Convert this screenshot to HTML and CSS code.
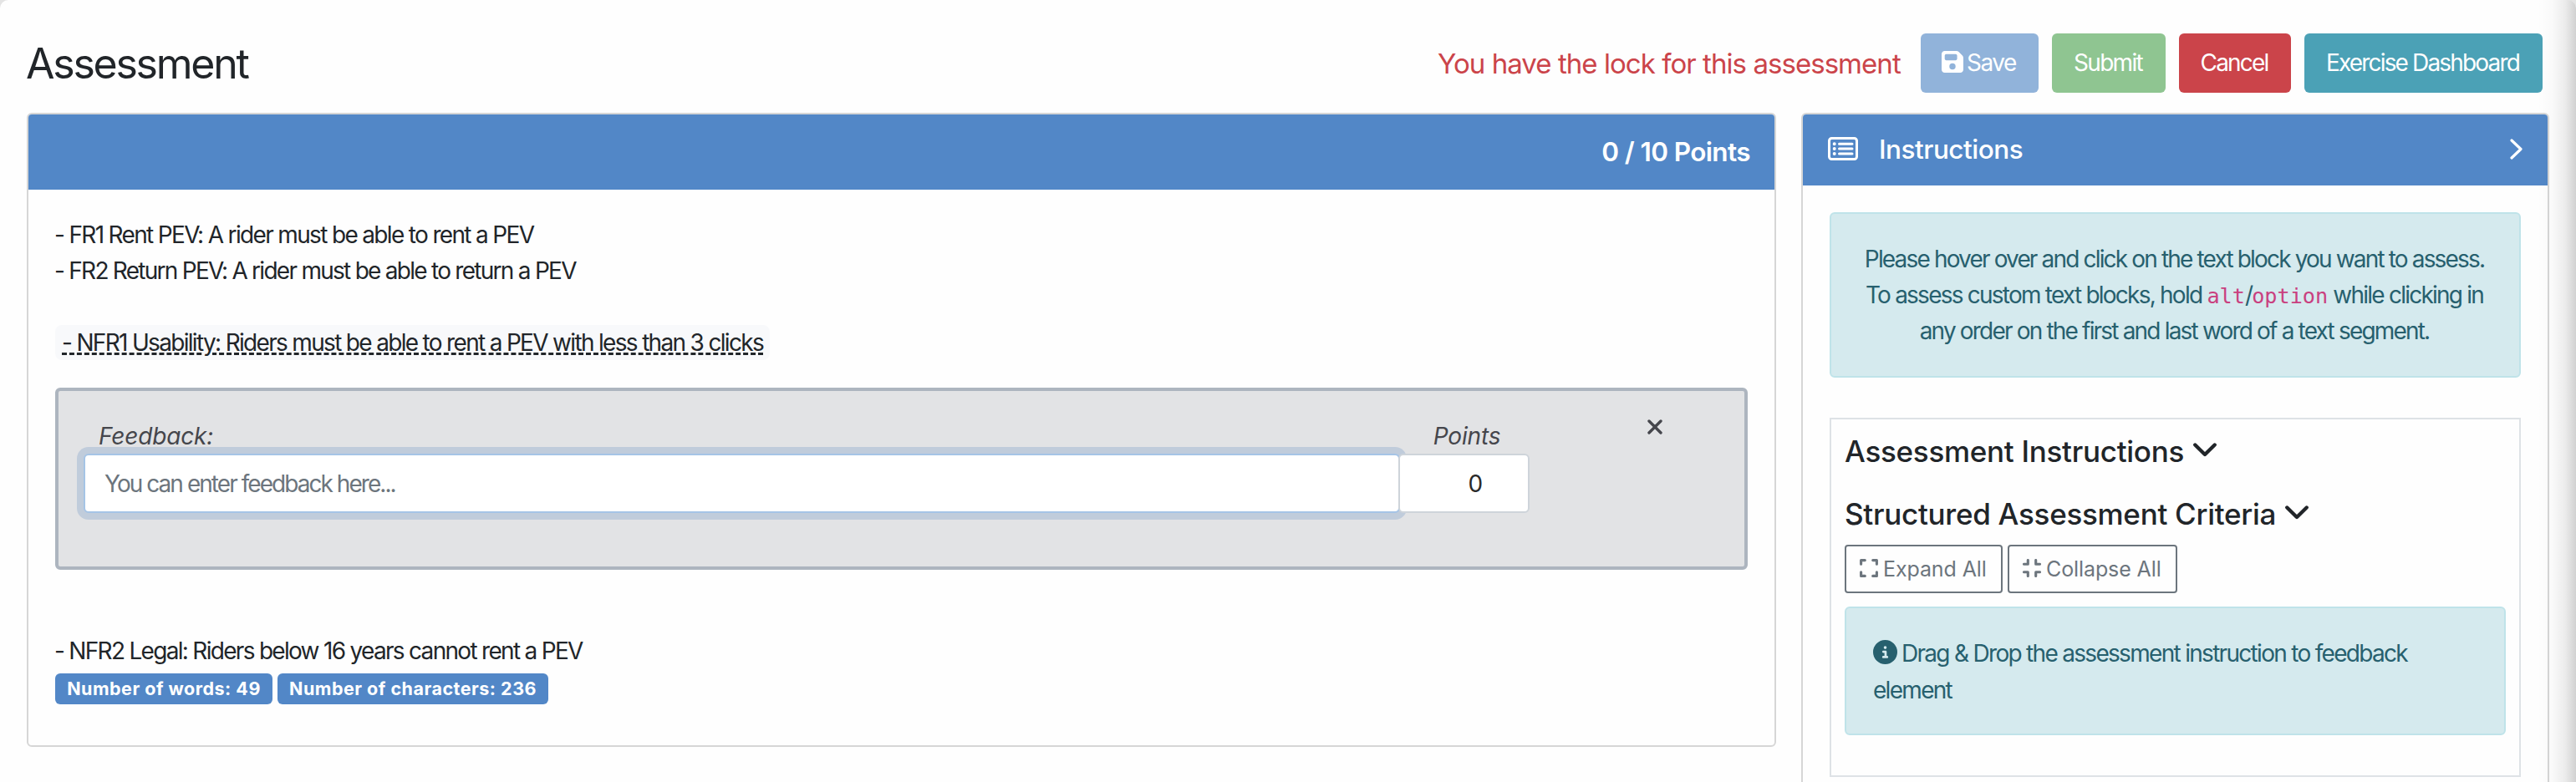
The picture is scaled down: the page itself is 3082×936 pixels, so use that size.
FILE: index.html
```html
<!DOCTYPE html>
<html lang="en">
<head>
<meta charset="utf-8">
<title>Assessment</title>
<link rel="stylesheet" href="styles.css">
</head>
<body>
<div class="page">
  <header class="topbar">
    <h1 class="title">Assessment</h1>
    <div class="actions">
      <span class="lock-note">You have the lock for this assessment</span>
      <button class="btn btn-save"><svg class="icon-save" viewBox="0 32 448 448"><path fill-rule="evenodd" d="M64 32C28.7 32 0 60.7 0 96V416c0 35.3 28.7 64 64 64H384c35.3 0 64-28.7 64-64V173.3c0-17-6.7-33.3-18.7-45.3L352 50.7C340 38.7 323.7 32 306.7 32H64zm0 96c0-17.700 14.300-32 32-32H288c17.700 0 32 14.300 32 32v64c0 17.700-14.300 32-32 32H96c-17.700 0-32-14.300-32-32V128zM224 288a64 64 0 1 1 0 128 64 64 0 1 1 0-128z"/></svg>Save</button>
      <button class="btn btn-submit">Submit</button>
      <button class="btn btn-cancel">Cancel</button>
      <button class="btn btn-dashboard">Exercise Dashboard</button>
    </div>
  </header>

  <main class="columns">
    <section class="card card-text">
      <div class="card-header points-header">0 / 10 Points</div>
      <div class="card-body">
        <p class="line">- FR1 Rent PEV: A rider must be able to rent a PEV</p>
        <p class="line line-fr2">- FR2 Return PEV: A rider must be able to return a PEV</p>
        <p class="line">&nbsp;</p>
        <p class="line"><span class="block-ref">- NFR1 Usability: Riders must be able to rent a PEV with less than 3 clicks</span></p>
        <div class="feedback">
          <div class="field field-text">
            <label class="label">Feedback:</label>
            <div class="input input-focus">You can enter feedback here...</div>
          </div>
          <div class="field field-points">
            <label class="label label-points">Points</label>
            <div class="input input-points">0</div>
          </div>
          <svg class="icon-close" viewBox="0 0 18 18"><path d="M2 2L16 16M16 2L2 16"/></svg>
        </div>
        <p class="line">&nbsp;</p>
        <p class="line line-nfr2">- NFR2 Legal: Riders below 16 years cannot rent a PEV</p>
        <div class="badges">
          <span class="badge badge-words">Number of words: 49</span>
          <span class="badge badge-chars">Number of characters: 236</span>
        </div>
      </div>
    </section>

    <aside class="card card-help">
      <div class="card-header help-header">
        <svg class="icon-list" viewBox="0 0 36 28"><rect x="1.500" y="1.500" width="33" height="25" rx="3"/><path d="M13.500 8.300H29M13.500 14H29M13.500 19.900H29"/><path class="dots" d="M7.700 8.300h.01M7.700 14h.01M7.700 19.900h.01"/></svg>
        <span class="help-title">Instructions</span>
        <svg class="icon-right" viewBox="0 0 15 25"><path d="M2 2L13 12.500L2 23"/></svg>
      </div>
      <div class="card-body">
        <div class="alert alert-hint"><span class="hint-click">Please hover over and click on the text block you want to assess.</span><br><span class="hint-custom">To assess custom text blocks, hold <code>alt</code>/<code>option</code> while clicking in</span><br><span class="hint-order">any order on the first and last word of a text segment.</span></div>
        <div class="criteria">
          <h2 class="section-title">Assessment Instructions <svg class="icon-down" viewBox="0 0 28 17"><path d="M2.300 2.500L14 14L25.700 2.500"/></svg></h2>
          <h2 class="section-title">Structured Assessment Criteria <svg class="icon-down" viewBox="0 0 28 17"><path d="M2.300 2.500L14 14L25.700 2.500"/></svg></h2>
          <div class="toggles">
            <button class="btn-sm btn-expand"><svg class="icon-sm" viewBox="0 0 22 22"><path d="M1.600 6.300V1.600H6.300M15.700 1.600H20.400V6.300M20.400 15.700V20.400H15.700M6.300 20.400H1.600V15.700"/></svg>Expand All</button>
            <button class="btn-sm btn-collapse"><svg class="icon-sm" viewBox="0 0 22 22"><path d="M1.500 6.200H6.300V1.500M15.700 1.500V6.200H20.500M1.500 15.800H6.300V20.500M20.500 15.800H15.700V20.500"/></svg>Collapse All</button>
          </div>
          <div class="alert alert-drag"><svg class="icon-info" viewBox="0 0 512 512"><path fill-rule="evenodd" d="M256 512A256 256 0 1 0 256 0a256 256 0 1 0 0 512zM216 336h24V272H216c-13.300 0-24-10.700-24-24s10.700-24 24-24h48c13.300 0 24 10.700 24 24v88h8c13.300 0 24 10.700 24 24s-10.700 24-24 24H216c-13.300 0-24-10.700-24-24s10.700-24 24-24zm40-208a32 32 0 1 1 0 64 32 32 0 1 1 0-64z"/></svg>Drag &amp; Drop the assessment instruction to feedback<br>element</div>
        </div>
      </div>
    </aside>
  </main>
  <div class="edge-shadow"></div>
</div>
</body>
</html>
```
FILE: styles.css
```css
* { box-sizing: border-box; }

body {
  margin: 0;
  background: #e4e4e4;
  font-family: Inter, "Open Sans", sans-serif;
  font-size: 28px;
  line-height: 43.2px;
  letter-spacing: -1.68px;
  color: #212529;
}

.page {
  position: relative;
  width: 3082px;
  height: 936px;
  overflow: hidden;
  padding: 0 32px;
  background: #fefefe;
  border-radius: 10px 10px 0 0;
}

h1, h2, p { margin: 0; }
svg { display: block; flex: none; }

/* Top bar */
.topbar {
  display: flex;
  justify-content: space-between;
  height: 135px;
  padding: 40px 8px 24px 0;
}
.title {
  padding-top: 1px;
  margin-left: -1px;
  font-size: 50px;
  font-weight: 400;
  line-height: 71px;
  letter-spacing: -2.25px;
}
.actions { display: flex; gap: 16px; height: 71px; }
.lock-note {
  width: 555px;
  margin-right: 7px;
  font-size: 33px;
  line-height: 72px;
  letter-spacing: -0.95px;
  white-space: nowrap;
  color: #cb444a;
}
.btn {
  display: flex;
  align-items: center;
  justify-content: center;
  height: 71px;
  padding: 0 2px 0 0;
  border: 0;
  border-radius: 6px;
  font: inherit;
  letter-spacing: -1.7px;
  white-space: nowrap;
  color: #fff;
}
.btn-save { width: 141px; background: #91b3da; letter-spacing: -1.5px; }
.icon-save { width: 26px; height: 26px; margin: -3px 4px 0 0; fill: #fff; }
.btn-submit { width: 136px; background: #8fc591; }
.btn-cancel { width: 134px; background: #cb444a; letter-spacing: -1.8px; }
.btn-dashboard { width: 285px; background: #4ba1b6; letter-spacing: -1.84px; }

/* Cards */
.columns {
  display: grid;
  grid-template-columns: 2093px 895px;
  gap: 30px;
  align-items: start;
}
.card {
  overflow: hidden;
  background: #fefefe;
  border: 2px solid #d6d6d6;
  border-radius: 6px;
}
.card-text { height: 759px; }
.card-help { height: 830px; }
.card-header { color: #fff; background: #5287c7; font-size: 31.5px; }
.card-body { padding: 32px; }

.points-header {
  height: 90px;
  padding: 0 29px;
  line-height: 90px;
  text-align: right;
  font-weight: 600;
  letter-spacing: -0.6px;
}

/* Assessed text */
.line { height: 43.2px; line-height: 45px; white-space: nowrap; letter-spacing: -1.66px; margin-left: -1px; }
.line-fr2 { letter-spacing: -1.73px; }
.line-nfr2 { letter-spacing: -1.7px; }
.block-ref {
  display: block;
  width: 855px;
  height: 42px;
  margin-left: 1px;
  padding-left: 8px;
  border-radius: 8px;
  background: #f8f9fb;
  line-height: 43.2px;
  letter-spacing: -1.68px;
  text-decoration: underline dashed 3px;
  text-underline-offset: 2px;
}

/* Feedback form */
.feedback {
  display: flex;
  height: 218px;
  margin: 32px 0;
  padding: 32px 30px;
  border: 4px solid #adb5bf;
  border-radius: 6px;
  background: #e2e3e5;
}
.field-text { width: 1575px; }
.field-points { position: relative; width: 157px; margin-left: -2px; }
.label {
  display: block;
  height: 43.2px;
  padding-left: 18px;
  line-height: 45px;
  font-style: italic;
  letter-spacing: -0.15px;
  color: #45464c;
}
.label-points { padding: 0 0 0 7px; text-align: center; }
.input {
  height: 71px;
  border: 2px solid #ced4da;
  border-radius: 6px;
  background: #fff;
  line-height: 69px;
}
.input-focus {
  padding-left: 23px;
  border-color: #a5c4e6;
  box-shadow: 0 0 0 8px #c0ccdb;
  letter-spacing: -1.95px;
  color: #6c757d;
}
.input-points { padding-right: 24px; padding-left: 50px; text-align: center; color: #2a2a2a; }
.icon-close { width: 18px; height: 18px; margin: 2px 0 0 141px; fill: none; stroke: #45464c; stroke-width: 3.4; stroke-linecap: round; }

/* Counters */
.badges { display: flex; gap: 6px; margin-top: 6px; }
.badge {
  height: 37px;
  border-radius: 6px;
  background: #5287c7;
  color: #fff;
  font-size: 21.5px;
  font-weight: 700;
  line-height: 36px;
  text-align: center;
  letter-spacing: 0.5px;
  white-space: nowrap;
}
.badge-words { width: 260px; }
.badge-chars { width: 324px; }

/* Instructions */
.help-header { display: flex; align-items: center; height: 85px; padding: 0 30px; }
.icon-list { width: 36px; height: 28px; margin-top: -3px; fill: none; stroke: #fff; stroke-width: 3; }
.icon-list path { stroke-width: 3; stroke-linecap: round; }
.icon-list .dots { stroke-width: 4; }
.help-title { flex: 1; margin: -1px 0 0 25px; font-weight: 500; letter-spacing: -0.5px; }
.icon-right { width: 15px; height: 25px; margin-top: -3px; fill: none; stroke: #fff; stroke-width: 3.2; stroke-linecap: round; stroke-linejoin: round; }

.alert {
  border: 2px solid #bfe3e9;
  border-radius: 6px;
  background: #d5eaee;
  color: #27606e;
  white-space: nowrap;
}
.alert-hint { height: 198px; padding: 33px 2px 0 0; text-align: center; }
.hint-click { letter-spacing: -1.84px; }
.hint-custom { letter-spacing: -1.77px; }
.hint-order { letter-spacing: -1.82px; }
code {
  font-family: "DejaVu Sans Mono", "Liberation Mono", monospace;
  font-size: 25.2px;
  letter-spacing: 0;
  line-height: 1;
  color: #c9407f;
}
.criteria { height: 430px; margin-top: 48px; padding: 16px; border: 2px solid #dee2e6; }
.section-title {
  display: flex;
  align-items: center;
  height: 43.2px;
  margin-bottom: 32px;
  line-height: 44px;
  font-size: 35px;
  font-weight: 500;
  letter-spacing: -0.28px;
}
.icon-down { width: 28px; height: 17px; margin: -3px 0 0 11px; fill: none; stroke: #212529; stroke-width: 4.4; stroke-linecap: round; stroke-linejoin: round; }
.toggles { display: flex; gap: 6px; margin-top: -16px; }
.btn-sm {
  display: flex;
  align-items: center;
  height: 58px;
  padding: 0 0 0 16px;
  border: 2px solid #6c757d;
  border-radius: 4px;
  background: #fefefe;
  font: inherit;
  font-size: 25px;
  letter-spacing: -0.1px;
  color: #6c757d;
  white-space: nowrap;
}
.btn-expand { width: 189px; }
.btn-collapse { width: 203px; }
.icon-sm { width: 22px; height: 22px; margin: -2px 6px 0 0; fill: none; stroke: #6c757d; stroke-width: 3.1; stroke-linecap: round; stroke-linejoin: round; }
.alert-drag { height: 154px; margin-top: 16px; padding: 33px 32px 0; letter-spacing: -1.7px; }
.icon-info { display: inline-block; width: 29px; height: 29px; margin-right: 5px; vertical-align: -3px; fill: #27606e; }

/* Scroll shadow on the window's right side */
.edge-shadow {
  position: absolute;
  top: 0;
  right: 0;
  width: 46px;
  height: 936px;
  background: linear-gradient(to right, rgba(0,0,0,0), rgba(0,0,0,.02) 40%, rgba(0,0,0,.075) 72%, rgba(0,0,0,.175));
}
```
